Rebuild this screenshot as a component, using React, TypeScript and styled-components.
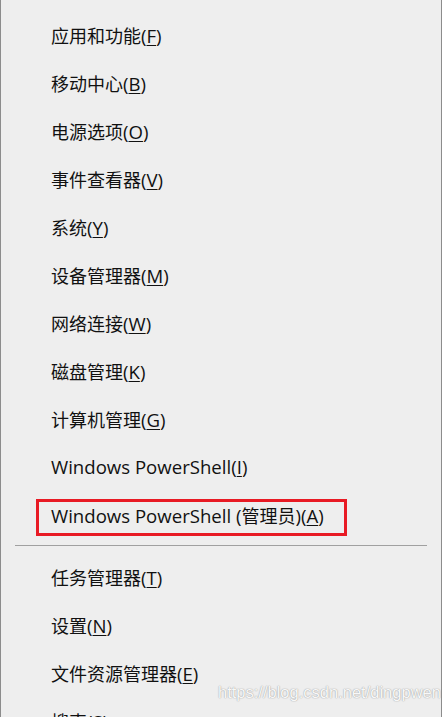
import styled, {createGlobalStyle} from 'styled-components';

const GlobalStyle = createGlobalStyle`
  html, body {
    margin: 0;
    padding: 0;
    background: #eeeeee;
  }
`

type Entry = {
    label: string
    accessKey: string
    highlighted?: boolean
}

const topItems: Entry[] = [
    {label: '应用和功能', accessKey: 'F'},
    {label: '移动中心', accessKey: 'B'},
    {label: '电源选项', accessKey: 'O'},
    {label: '事件查看器', accessKey: 'V'},
    {label: '系统', accessKey: 'Y'},
    {label: '设备管理器', accessKey: 'M'},
    {label: '网络连接', accessKey: 'W'},
    {label: '磁盘管理', accessKey: 'K'},
    {label: '计算机管理', accessKey: 'G'},
    {label: 'Windows PowerShell', accessKey: 'I'},
    {label: 'Windows PowerShell (管理员)', accessKey: 'A', highlighted: true},
]

const bottomItems: Entry[] = [
    {label: '任务管理器', accessKey: 'T'},
    {label: '设置', accessKey: 'N'},
    {label: '文件资源管理器', accessKey: 'E'},
    {label: '搜索', accessKey: 'S'},
]

const splitRuns = (text: string) => text.match(/[\u4e00-\u9fff]+|[^\u4e00-\u9fff]+/g) ?? []

const MenuItem = ({label, accessKey, highlighted}: Entry) => (
    <Item>
        <Label>
            {splitRuns(label).map((run, i) =>
                /[\u4e00-\u9fff]/.test(run) ? <Han key={i}>{run}</Han> : run
            )}
            (<Key>{accessKey}</Key>)
        </Label>
        {highlighted && <Marker/>}
    </Item>
)

export default function App() {
    return (
        <>
            <GlobalStyle/>
            <Menu>
                {topItems.map(item => <MenuItem key={item.label} {...item}/>)}
                <Separator/>
                {bottomItems.map(item => <MenuItem key={item.label} {...item}/>)}
                <Watermark>https://blog.csdn.net/dingpwen</Watermark>
            </Menu>
        </>
    )
}

const Menu = styled.div`
  position: relative;
  width: 442px;
  height: 717px;
  box-sizing: border-box;
  overflow: hidden;
  background: #eeeeee;
  border-left: 1px solid #8c8c8c;
  border-right: 1px solid #8c8c8c;
  padding-top: 11px;
  display: flex;
  flex-direction: column;
`

const Item = styled.div`
  position: relative;
  flex: none;
  height: 48px;
  display: flex;
  align-items: center;
  padding-left: 50px;
`

const Label = styled.span`
  font-family: "Open Sans", "Noto Sans CJK SC", sans-serif;
  font-size: 18.6px;
  line-height: 24px;
  color: #111111;
  white-space: nowrap;
`

const Han = styled.span`
  font-family: "Noto Sans CJK SC", sans-serif;
  font-size: 18px;
`

const Key = styled.span`
  text-decoration: underline;
  text-underline-offset: 2px;
  text-decoration-thickness: 1px;
`

const Marker = styled.div`
  position: absolute;
  left: 35px;
  top: 8px;
  width: 311px;
  height: 37px;
  box-sizing: border-box;
  border: 3px solid #e81a24;
`

const Separator = styled.div`
  flex: none;
  height: 1px;
  background: #a0a0a0;
  margin: 6px 14px 7px 14px;
`

const Watermark = styled.div`
  position: absolute;
  left: 217px;
  top: 683px;
  font-family: "Liberation Sans", Arial, sans-serif;
  font-size: 16.5px;
  color: #f8f8f8;
  text-shadow: 0 0 1px rgba(0, 0, 0, 0.35), 0 0 2px rgba(0, 0, 0, 0.15);
`
